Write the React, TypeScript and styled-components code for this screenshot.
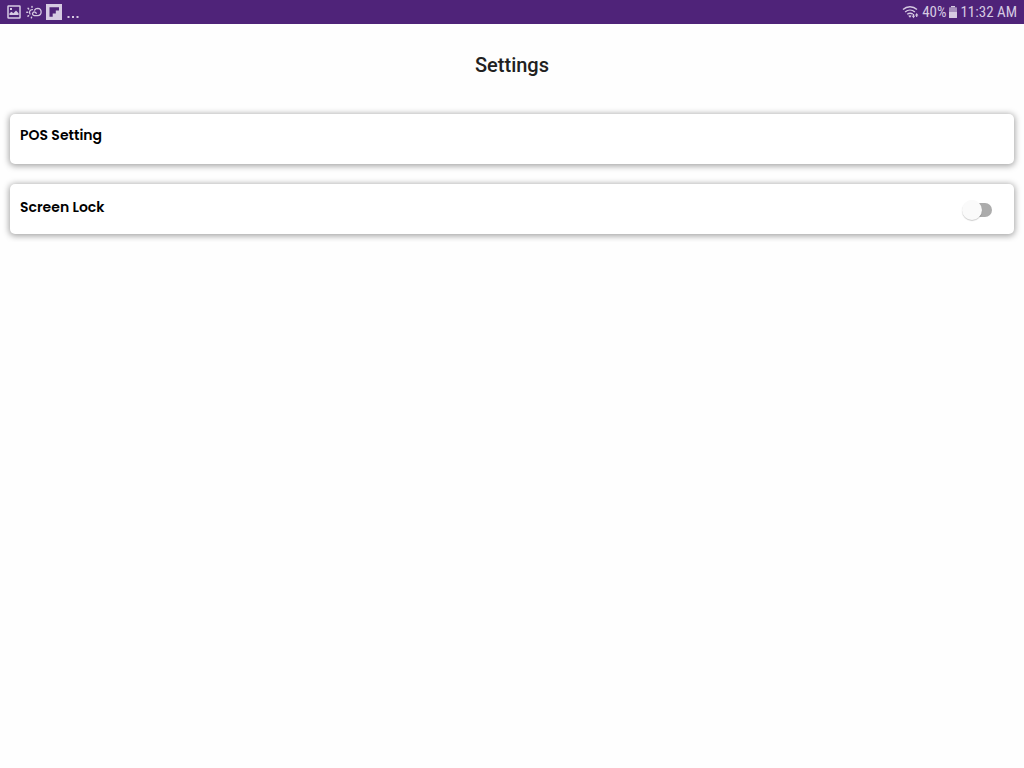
import React, { useState } from "react";
import styled, { createGlobalStyle } from "styled-components";

const GlobalStyle = createGlobalStyle`
  * { box-sizing: border-box; }
  body {
    margin: 0;
    background: #fefefe;
    font-family: Roboto, "Liberation Sans", sans-serif;
  }
`;

const StatusBar = styled.header`
  display: flex;
  align-items: center;
  justify-content: space-between;
  height: 24px;
  padding: 0 7px 0 6px;
  background: #4f2379;
  color: #d6cae2;
  font-family: "Roboto Condensed", Roboto, sans-serif;
  font-size: 15px;
  line-height: 24px;
`;

const StatusGroup = styled.div<{ $gap: number }>`
  display: flex;
  align-items: center;
  gap: ${({ $gap }) => $gap}px;
`;

const More = styled.svg`
  align-self: flex-end;
`;

const Title = styled.h1`
  margin: 0;
  padding: 29px 0;
  color: #212121;
  font-size: 20px;
  line-height: 24px;
  font-weight: 500;
  text-align: center;
`;

const List = styled.main`
  display: flex;
  flex-direction: column;
  gap: 20px;
  padding: 8px 10px;
`;

const Card = styled.section`
  display: flex;
  height: 50px;
  padding: 0 22px 0 10px;
  border-radius: 5px;
  background: #fff;
  box-shadow: 0 1px 6px 1px rgba(0, 0, 0, 0.36);
  color: #000;
  font-family: Poppins, Inter, sans-serif;
  font-size: 14px;
  font-weight: 600;
  line-height: 20px;
`;

const CardButton = styled.button`
  flex: 1;
  padding: 11px 0 19px;
  border: 0;
  background: none;
  color: inherit;
  font: inherit;
  text-align: left;
  cursor: pointer;
`;

const SwitchRow = styled.label`
  display: flex;
  flex: 1;
  align-items: center;
  justify-content: space-between;
`;

const SwitchText = styled.span`
  padding-bottom: 4px;
`;

const Switch = styled.input`
  appearance: none;
  display: flex;
  align-items: center;
  width: 28px;
  height: 14px;
  margin: 2px 0 0;
  border-radius: 7px;
  background: #acacac;
  cursor: pointer;

  &::before {
    content: "";
    flex: none;
    width: 20px;
    height: 20px;
    margin-left: -2px;
    border-radius: 50%;
    background: #fafafa;
    box-shadow: 0 1px 1px rgba(0, 0, 0, 0.2);
  }

  &:checked::before {
    margin-left: 10px;
    background: #4f2379;
  }
`;

const PictureIcon = () => (
  <svg width="16" height="16" viewBox="0 0 16 16" fill="none" aria-hidden="true">
    <rect x="2" y="2" width="12" height="12" rx="0.6" stroke="currentColor" strokeWidth="1.5" />
    <path d="M3.4 11V9.4l2-1.6 2 1.4 2.6-2.8 2.6 2.8V11z" fill="currentColor" />
    <rect x="4" y="4" width="2" height="2" fill="currentColor" />
  </svg>
);

const WeatherIcon = () => (
  <svg width="16" height="16" viewBox="0 0 16 16" fill="none" stroke="currentColor" strokeLinecap="round" aria-hidden="true">
    <path d="M4 10A2.8 2.8 0 0 1 6.4 5.6" strokeWidth="1.3" />
    <path d="M10.2 9.3C9.8 7.9 8 7.5 7 8.6c-1 1.2-.3 3 1.4 3h3.2c4.8 0 4.6-7.2.1-7.3-1.5 0-2.5.7-3.1 1.8" strokeWidth="1.3" />
    <path d="M.8 8.3h.8M2.1 4.4l.6.6M6 2.6v.6M2 12.2l.6-.5M5.4 13.8l.1-.5" strokeWidth="1.5" />
  </svg>
);

const FlipIcon = () => (
  <svg width="16" height="16" viewBox="0 0 16 16" aria-hidden="true">
    <path fill="currentColor" fillRule="evenodd" d="M0 0h16v16H0zM3.5 3.2v9.6h3.2V9.6h3.1V6.4h3.2V3.2z" />
  </svg>
);

const WifiIcon = () => (
  <svg width="17" height="16" viewBox="0 0 17 16" fill="none" stroke="currentColor" aria-hidden="true">
    <path d="M1 5.5C5 1.9 11 1.9 15 5.5M3.1 8c2.9-2.5 6.9-2.5 9.8 0M5.2 10.3c1.7-1.3 3.9-1.3 5.6-.2" strokeWidth="1.4" />
    <path d="M6.2 11.8q1.8-1.2 3.4 0L8 13.8z" fill="currentColor" stroke="none" />
    <path d="M9.8 11.7h1.1V10h1.2v1.7h1.1l-1.7 2.5zM13 11.4L14.7 9l1.7 2.4h-1.1v1.7h-1.2v-1.7z" fill="currentColor" stroke="none" />
  </svg>
);

const BatteryIcon = () => (
  <svg width="8" height="12" viewBox="0 0 8 12" fill="currentColor" aria-hidden="true">
    <path d="M0 1.9q0-.6.6-.6h6.8q.6 0 .6.6V6H0z" fillOpacity="0.65" />
    <path d="M2 0h4v1.3H2zM0 6h8v5.4q0 .6-.6.6H.6q-.6 0-.6-.6z" />
  </svg>
);

export default function App() {
  const [locked, setLocked] = useState(false);
  return (
    <>
      <GlobalStyle />
      <StatusBar>
        <StatusGroup $gap={4}>
          <PictureIcon />
          <WeatherIcon />
          <FlipIcon />
          <More width="14" height="12" viewBox="0 0 14 12" fill="currentColor" aria-hidden="true">
            <path d="M1.5 8h2v2h-2zM6 8h2v2H6zM10.5 8h2v2h-2z" />
          </More>
        </StatusGroup>
        <StatusGroup $gap={3}>
          <WifiIcon />
          <span>40%</span>
          <BatteryIcon />
          <time>11:32 AM</time>
        </StatusGroup>
      </StatusBar>
      <Title>Settings</Title>
      <List>
        <Card>
          <CardButton type="button">POS Setting</CardButton>
        </Card>
        <Card>
          <SwitchRow htmlFor="screen-lock">
            <SwitchText>Screen Lock</SwitchText>
            <Switch
              id="screen-lock"
              type="checkbox"
              role="switch"
              checked={locked}
              onChange={(e) => setLocked(e.target.checked)}
            />
          </SwitchRow>
        </Card>
      </List>
    </>
  );
}
